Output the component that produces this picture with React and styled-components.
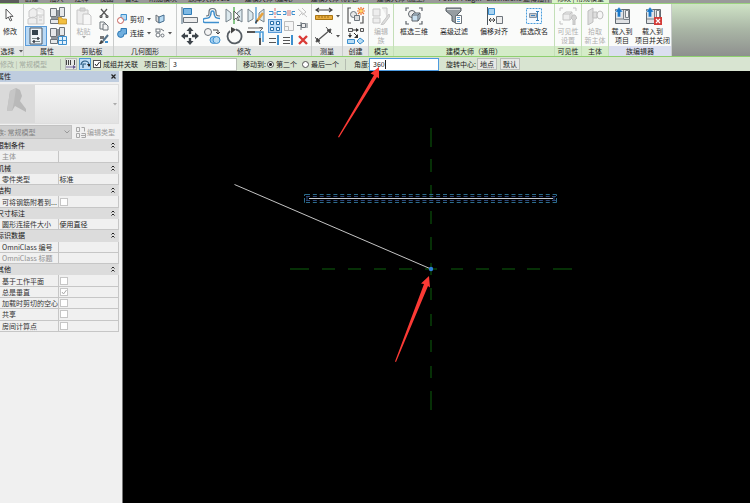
import React from 'react';
import styled, { createGlobalStyle, css } from 'styled-components';

const Global = createGlobalStyle`
  * { box-sizing: border-box; }
  body { margin: 0; background: #000; overflow: hidden; }
  body, button, input, select {
    font-family: "Noto Sans CJK SC", sans-serif;
    font-size: 7px;
    line-height: 9px;
    color: #222;
  }
`;

const Page = styled.div`
  position: relative;
  display: flex;
  flex-direction: column;
  min-height: 100vh;
`;

/* ---------- tab strip ---------- */
const TabStrip = styled.nav`
  display: grid;
  grid-template-columns: 19px repeat(5, 25px) 38px 54px 66px 66px 66px 52px 36px 30px 57px 1fr;
  height: 3px;
  overflow: hidden;
  background: #9a9a9a;
`;
const Tab = styled.button`
  display: flex;
  align-items: flex-end;
  justify-content: center;
  height: 3px;
  padding: 0;
  border: 0;
  white-space: nowrap;
  background: ${p => (p.$active ? '#d9f3ca' : p.$app ? '#5c5c5c' : 'transparent')};
`;

/* ---------- ribbon ---------- */
const Ribbon = styled.div`
  display: flex;
  height: 54px;
  border-top: 1px solid #9bd37f;
  border-bottom: 1px solid #8fd070;
  background: linear-gradient(#cfe3c6, #a9b5a5 50%, #8e908e);
`;
const tones = { plain: '#e3e5e4', green: '#d4ecc8', blue: '#dbdff0' };
const Panel = styled.section`
  display: flex;
  flex-direction: column;
  flex: none;
  width: ${p => p.$w}px;
  border-right: 1px solid ${p => (p.$tone === 'green' ? '#c4dfb8' : '#c9cccb')};
  background: #fafbfa;
`;
const PanelBody = styled.div`
  flex: 1;
  display: flex;
  min-height: 0;
  justify-content: ${p => p.$justify || 'center'};
  gap: ${p => p.$gap || 0}px;
  padding: 2px 0 0;
`;
const PanelLabel = styled.div`
  height: 10px;
  display: flex;
  align-items: center;
  justify-content: center;
  gap: 4px;
  white-space: nowrap;
  background: ${p => tones[p.$tone || 'plain']};
`;
const Cells = styled.div`
  display: grid;
  grid-template-columns: ${p => p.$cols};
  grid-template-rows: ${p => p.$rows};
  place-items: center;
`;
const Tool = styled.button`
  display: flex;
  align-items: center;
  justify-content: ${p => (p.$start ? 'flex-start' : 'center')};
  gap: 3px;
  width: 100%;
  height: 100%;
  padding: 0;
  border: 1px solid ${p => (p.$on ? '#5a9bd8' : 'transparent')};
  background: ${p => (p.$on ? '#b9d9f5' : 'transparent')};
  white-space: nowrap;
  svg { flex: none; display: block; }
`;
const BigTool = styled.button`
  display: flex;
  flex-direction: column;
  align-items: center;
  flex: none;
  width: ${p => p.$w}px;
  padding: 1px 0 0;
  border: 0;
  background: transparent;
  white-space: nowrap;
  color: ${p => (p.$off ? '#b0b0b0' : '#222')};
  svg { display: block; margin-bottom: 2px; }
`;

/* ---------- options bar ---------- */
const Options = styled.form`
  display: grid;
  grid-template-columns: 60px 5px 12px 2px 12px 2px 51px 25px 68px 6px 24px 35px 43px 9px 15px 70px 7px 31px 20px 3px 20px;
  align-items: center;
  height: 14px;
  background: #d8e4d1;
  white-space: nowrap;
`;
const Dim = styled.span`color: #a3aba0;`;
const Rule = styled.span`
  width: 1px;
  height: 11px;
  background: #b5bdb1;
`;
const Mini = styled.button`
  display: flex;
  align-items: center;
  justify-content: center;
  height: 12px;
  padding: 0;
  border: 1px solid ${p => (p.$on ? '#4f97d6' : '#b9bdb8')};
  background: ${p => (p.$on ? '#c3def5' : '#e6e8e5')};
`;
const Field = styled.input`
  width: 100%;
  height: 13px;
  padding: 0 3px;
  border: 1px solid ${p => (p.$focus ? '#4d9be0' : '#b8bdb6')};
  background: #fff;
  outline: 0;
`;
const FieldWrap = styled.span`
  display: grid;
  position: relative;
`;
const Caret = styled.i`
  position: absolute;
  left: 16px;
  top: 2px;
  width: 1px;
  height: 9px;
  background: #222;
`;
const Choice = styled.label`
  display: flex;
  align-items: center;
  gap: 2px;
`;
const Radio = styled.input`
  appearance: none;
  width: 7px;
  height: 7px;
  margin: 0;
  border: 1px solid #555;
  border-radius: 50%;
  background: #fff;
  &:checked { background: radial-gradient(#222 0 1px, #fff 2px); }
`;
const TickBox = styled.span`
  display: grid;
  width: 8px;
  height: 8px;
  > * { grid-area: 1 / 1; }
  svg { pointer-events: none; }
`;
const TickInput = styled.input`
  appearance: none;
  width: 8px;
  height: 8px;
  margin: 0;
  border: 1px solid ${p => (p.$pale ? '#c6c6c6' : '#555')};
  background: #fff;
`;

/* ---------- work area ---------- */
const Work = styled.main`
  display: flex;
  flex: 1;
`;
const Side = styled.aside`
  flex: none;
  width: 123px;
  padding-right: 3px;
  border-right: 1px solid #777;
  background: #f0f0f0;
  overflow: hidden;
`;
const SideTitle = styled.header`
  display: flex;
  align-items: center;
  justify-content: space-between;
  height: 11px;
  background: #bfcddf;
`;
const Cut = styled.span`margin-left: -3px;`;
const Close = styled.button`
  display: flex;
  padding: 0 3px;
  border: 0;
  background: transparent;
`;
const Preview = styled.button`
  display: flex;
  align-items: center;
  justify-content: space-between;
  width: 100%;
  height: 40px;
  margin: 2px 0 1px;
  padding: 0 1px 0 0;
  border: 1px solid #dedede;
  border-left: 0;
  background: linear-gradient(#f5f5f5, #e2e2e2);
`;
const TypeRow = styled.div`
  display: grid;
  grid-template-columns: 72px 1fr;
  height: 14px;
`;
const TypeBox = styled.span`
  position: relative;
  display: grid;
  svg { position: absolute; right: 2px; top: 5px; pointer-events: none; }
`;
const TypeSelect = styled.select`
  appearance: none;
  width: 100%;
  height: 14px;
  padding: 0;
  text-indent: -3px;
  border: 1px solid #c2c2c2;
  border-left: 0;
  border-radius: 0;
  background: #cfcfcf;
  color: #808080;
  opacity: 1;
`;
const EditType = styled.button`
  display: flex;
  align-items: center;
  gap: 1px;
  padding: 0 0 0 3px;
  border: 0;
  background: transparent;
  color: #9b9b9b;
  white-space: nowrap;
`;
const Props = styled.table`
  width: 119px;
  height: 193px;
  table-layout: fixed;
  border-collapse: collapse;
  white-space: nowrap;
  tr { height: 11px; }
`;
const cell = css`
  padding: 0;
  text-align: left;
  font-weight: 400;
  line-height: 8px;
  vertical-align: middle;
  overflow: hidden;
`;
const GroupCell = styled.th`
  ${cell}
  border: 1px solid #dcdcdc;
  border-left: 0;
  background: #dcdcdc;
  color: #111;
  div { display: flex; justify-content: space-between; align-items: center; height: 8px; padding-right: 3px; }
`;
const NameCell = styled.th`
  ${cell}
  padding-left: 2px;
  border: 1px solid #c6c6c6;
  border-left: 0;
  color: ${p => (p.$off ? '#8f8f8f' : '#333')};
`;
const ValueCell = styled.td`
  ${cell}
  padding-left: 1px;
  border: 1px solid #c6c6c6;
`;
const Canvas = styled.div`
  flex: 1;
  min-width: 0;
  background: #000;
  overflow: hidden;
  svg { display: block; }
`;
const Notes = styled.svg`
  position: absolute;
  left: 330px;
  top: 60px;
  pointer-events: none;
`;

/* ---------- drawings ---------- */
const G = '#6d747b';
const B = '#3d8fce';
const L = '#b9dcf3';
const drawings = {
  cursor: <path d="M5 2v10l2.300-2 2 4 1.500-.8-2-3.800H12z" fill="#fff" stroke="#444" strokeWidth=".9" />,
  family: <g fill="#eee" stroke="#c9c9c9"><path d="M2 4l4-3 4 2v6l-4 2-4-1zM8 3l4-2 5 2v5M1 12l5-2 4 2v5H1z" /><path d="M10 8h7v9h-7z" /><path d="M12 10h3M12 13h3" /></g>,
  typeFolder: <g><path d="M1.500 1.500h6v8h-6zM10.500.5h5v9h-5zM1.500 12.500h8v4h-8z" fill="#e6e8ea" stroke={G} /><path d="M9 3v8H2" fill="none" stroke={G} strokeWidth="1.500" /><path d="M9.500 10.500h3l1 1.500h4v5h-8z" fill="#f2bf41" stroke="#b98516" strokeWidth=".7" /></g>,
  props: <g><path d="M3 1h12v16H3z" fill="#eef3f7" stroke="#4c5964" /><path d="M5 3h6v5H5z" fill="#33414d" /><path d="M5 11.500h8M5 14.500h8" stroke="#566" strokeWidth=".8" /><path d="M11 10v3M7 13v3" stroke="#223" strokeWidth="1.300" /></g>,
  typeGrid: <g><path d="M1.500 1.500h6v8h-6zM10.500.5h5v8h-5zM1.500 12.500h7v4h-7z" fill="#e6e8ea" stroke={G} /><path d="M9 2v9H2" fill="none" stroke={G} strokeWidth="1.500" /><path d="M9.500 9.500h8v8h-8z" fill="#e2f1fc" stroke={B} /><path d="M13.500 9v9M9 13.500h9" stroke={B} /></g>,
  paste: <g fill="#ececec" stroke="#c6c6c6"><path d="M2 3h11v14H2z" /><path d="M5 1h5v3H5z" fill="#d8d8d8" /><path d="M8 7h6l2 2v9H8z" fill="#f7f7f7" /></g>,
  scissors: <g fill="none" stroke="#555" strokeWidth="1.200"><path d="M2 1l6 7M8 1L2 8" /><circle cx="2" cy="8.500" r="1" /><circle cx="8" cy="8.500" r="1" /></g>,
  copyDoc: <g fill="#f4f4f4" stroke={G}><path d="M1 1h4l2 2v5H1z" /><path d="M4 3h3l2 2v4H4z" /></g>,
  brush: <g><path d="M1 2h4v3H1z" fill="#777" /><path d="M9 1L4 7" stroke="#55738b" strokeWidth="2" /><path d="M2 6l3 2-3 2H0z" fill="#444" /><path d="M6 8h3" stroke={B} strokeWidth="2" /></g>,
  cut: <g><path d="M4 .5h5.500V6H6L4 4z" fill={L} stroke={B} /><circle cx="3.500" cy="6.500" r="3" fill="#fff" stroke="#c55e57" /></g>,
  join: <g fill="#6faede" stroke="#2c78b3"><path d="M4 .5h5.500V6H7a3.200 3.200 0 1 1-3-3z" /></g>,
  cope: <g><path d="M1 1l3 2v6L1 7z" fill="#ddd" stroke={G} /><path d="M4 3l5-2v6L4 9z" fill={L} stroke="#436b8c" /></g>,
  unjoin: <g fill="#fff" stroke={G}><rect x="1" y="1" width="4" height="3" /><circle cx="3" cy="7" r="2" /><circle cx="7.500" cy="7.500" r="1.500" /><path d="M6 1l3 2" /></g>,
  align: <g><path d="M1 0v17" stroke="#4f6a80" /><path d="M2.500 1.500h8v6h-8z" fill="#7eb9e4" stroke="#2f7db8" /><path d="M2.500 10.500h14v5h-14z" fill="#ececec" stroke={G} /></g>,
  offset: <g fill="none"><path d="M3 9c3 0 3-1 3-4a3.500 3.500 0 0 1 7 0c0 3 0 4 4 4" stroke="#68737c" strokeWidth="1.200" /><path d="M17 11.500c-4 0-6-1-6-6 0-2-3-2-3 0 0 5-2 6-6 6a2 2 0 0 0 0 4h14" stroke={B} strokeWidth="1.500" /></g>,
  mirror1: <g><path d="M1 2l5 4v6l-5 3zM17 2l-5 4v6l5 3z" fill="#dce9ee" stroke="#76838c" /><path d="M9 0v17" stroke="#63b663" strokeWidth="1.500" /><path d="M9 4v9l2-2 2 3 1-1-2-3h3z" fill="#fff" stroke="#444" strokeWidth=".8" /></g>,
  mirror2: <g><path d="M1 2l5 4v6l-5 3zM17 2l-5 4v6l5 3z" fill="#dce9ee" stroke="#76838c" /><path d="M9 0v17" stroke={B} strokeWidth="1.200" /><path d="M16 6l-6 8" stroke="#e7a13c" strokeWidth="2.500" /><path d="M10.500 13l-2 3" stroke="#444" strokeWidth="1.500" /></g>,
  move: <g fill="#3d444a"><path d="M9 0l3.500 4h-2.300v3H7.800V4H5.500zM9 18l3.500-4h-2.300v-3H7.800v3H5.500zM0 9l4-3.500v2.300h3v2.400H4v2.300zM18 9l-4-3.500v2.300h-3v2.400h3v2.300z" /></g>,
  copy: <g><circle cx="5" cy="5" r="3.500" fill="#f4f4f4" stroke={G} /><path d="M10 3h5v4M13 5l2 2 2-2" fill="none" stroke="#444" /><circle cx="10.500" cy="13" r="3.500" fill="#9fcdf0" stroke={B} /><circle cx="13.500" cy="13" r="3.500" fill={L} stroke={B} /></g>,
  rotate: <g><path d="M5 4a7 7 0 1 0 6-1.500" fill="none" stroke="#565d63" strokeWidth="1.800" /><path d="M6 0l5 2.500-5 4z" fill="#444" /></g>,
  corner: <g fill="none"><path d="M0 5h8M13 11v7" stroke="#555" strokeWidth="2" /><path d="M8 5h5v6M10 5h6v10" stroke="#4a9cd9" strokeWidth="1.500" /><path d="M1 1h14M12 0l4 1-3 3" stroke="#666" /></g>,
  split: <g fill="none" stroke={B}><path d="M0 4.500h4v3H0M12 4.500H8v3h4" /><path d="M6 1v10" stroke="#d66" strokeDasharray="3 1" /></g>,
  gap: <g fill="none" stroke={B}><path d="M0 4.500h3v3H0M12 4.500H9v3h3" /><path d="M5 3v6M7 3v6" stroke="#c77" /></g>,
  unpin: <g fill="none" stroke="#c3c3c3"><path d="M1 2l9 8M5 1l4 4-4 3M2 9l3-3" /></g>,
  array: <g fill="#f2f8fd" stroke="#286ea8"><path d="M1.500 1.500h3v3h-3zM7.500 1.500h3v3h-3zM1.500 7.500h3v3h-3zM7.500 7.500h3v3h-3z" /></g>,
  scale: <g fill="#f6f6f6" stroke="#bdbdbd"><path d="M1.500 1.500h9v9h-9z" /><path d="M1.500 6.500h4v4h-4z" /></g>,
  pin: <g fill="#eee" stroke={G}><path d="M4.500 3.500h4v4h-4zM4 2v8M0 5.500h4M10 3v5" /></g>,
  trim1: <g fill="none" stroke="#555"><path d="M0 4.500h7M0 8.500h7" /><path d="M9 1v10" stroke={B} strokeWidth="2" /></g>,
  trim2: <g fill="none" stroke="#555"><path d="M0 3.500h7M0 6.500h7M0 9.500h7" /><path d="M9 1v10" stroke={B} strokeWidth="2" /></g>,
  del: <path d="M2 2l8 8M10 2l-8 8" stroke="#d93a35" strokeWidth="2.400" />,
  ruler: <g><path d="M2 3h14M4 1L1 3l3 2M14 1l3 2-3 2" fill="none" stroke="#444" strokeWidth="1.200" /><path d="M.5 8.500h17v4H.5z" fill="#e9ad3d" stroke="#a87412" /><path d="M4 9v2M7 9v2M10 9v2M13 9v2" stroke="#7a5410" strokeWidth=".7" /></g>,
  dim: <g fill="none" stroke="#555"><path d="M2 14L15 3" strokeWidth="1.300" /><path d="M0 10l5 7M11 0l6 7" /><path d="M1 15l1-4 3 3zM16 2l-1 4-3-3z" fill="#444" /></g>,
  create: <g><path d="M4 1H1v15h3M13 16h3V9" fill="none" stroke="#555" strokeWidth="1.200" /><circle cx="6.500" cy="7.500" r="3" fill="#e8e8e8" stroke={G} /><path d="M7.500 8.500h5v5h-5z" fill="#ddd" stroke={G} /><path d="M14 0v8M10 4h8M11 1l6 6M17 1l-6 6" stroke="#ee7432" strokeWidth="1.200" /><circle cx="14" cy="4" r="1.800" fill="#ffd96b" /></g>,
  similar: <g><path d="M1.500 1.500h4v3h-4zM13.500 1.500h3v3h-3z" fill="#eee" stroke="#555" /><path d="M6 3h5M3 6v4M7 6l4 4" stroke="#333" /><path d="M9 1l3 2-3 2zM1 8h4l-2 3zM11 7v4H7z" fill="#333" /><path d="M.5 12.500h7v4h-7zM13 11l4 3-4 3-3-3z" fill={L} stroke={B} /></g>,
  editFam: <g fill="#eee" stroke="#c7c7c7"><path d="M1 2h7v7H1zM10 1h5v9M1 11h7v5H1z" /><path d="M17 7l-7 9-1 2 3-1 6-8z" fill="#ddd" /></g>,
  box3d: <g fill="none" stroke="#5d6369"><path d="M1 4V1h3M14 1h3v3M17 14v3h-3M4 17H1v-3" strokeWidth="1.200" /><circle cx="7" cy="7" r="3.500" fill="#eee" /><path d="M7 8l2-2h6v5l-2 3H7z" fill="#c9e0f0" /><path d="M7 8h6v6M13 8l2-2" /></g>,
  filter: <g><path d="M1 1h15v3l-5 5v7l-4-2V9L1 4z" fill="#969da2" stroke="#555d63" /><path d="M2 2.500h13" stroke="#d7dadd" /><path d="M10.500 8.500h6v8h-6z" fill="#fff" stroke={G} /><path d="M12 10.500h3M12 12.500h3M12 14.500h3" stroke={B} strokeWidth=".8" /></g>,
  shift: <g><path d="M2.500 0v18" stroke="#4c565e" /><path d="M3.500 1.500h6v6h-6z" fill="#a9d3f0" stroke={B} /><path d="M11.500 9.500h6v7h-6z" fill="#eee" stroke={G} /><path d="M4 13h6M6 11l-2 2 2 2M8 11l2 2-2 2" fill="none" stroke="#444" /></g>,
  rename: <g><path d="M1.500 1.500h15v15h-15z" fill="#f5faff" stroke="#499ddd" strokeDasharray="2 1" /><path d="M4.500 6.500h7v4h-7z" fill="#c4c9d1" stroke="#8895a4" /><path d="M6 8.500h4M12.500 4v10M11 4.500h3M11 13.500h3" stroke="#3b82bd" /></g>,
  visible: <g fill="#eee" stroke="#c3c3c3"><path d="M1 4V1h3M14 1h3v3M4 17H1v-3" fill="none" /><path d="M4 7l3-2h6v6l-2 2H4zM4 7h7v6M11 7l2-2" /><path d="M14 8l-2 3 2 2v5h2v-5l2-2-2-3z" fill="#d4d4d4" /></g>,
  host: <g fill="#dedede" stroke="#bfbfbf"><path d="M2 4l5-3v14l-5 3z" /><path d="M7 5h4v6H7z" /><ellipse cx="14" cy="8" rx="3" ry="4" fill="#f6f6f6" /></g>,
  load: <g><path d="M2.500 2.500h14v14h-14z" fill="#e0e2e4" stroke="#636b72" /><path d="M10.500 3v9H3M10.500 12.500h6" fill="none" stroke="#7a8288" /><path d="M12.500 3.500h3v7h-3z" fill="#f7f7f7" stroke="#7a8288" /><path d="M6 0L2 5h2.300v5h3.400V5H10z" fill="#1977c8" stroke="#e9f5ff" strokeWidth=".5" /></g>,
  ruleOpt: <g stroke="#444"><path d="M.5 1v5M2.500 1v5M4.500 1v5M8.500 1v5" /><path d="M0 8h8" stroke="#74699f" /><path d="M7 6l3 2-3 2z" fill="#67598f" stroke="none" /></g>,
  radial: <g fill="none" stroke="#24577f"><path d="M1 6a4 4 0 0 1 8 0M3 9V5h3" strokeWidth="1.200" /><path d="M7 5h4L9 8z" fill="#222" stroke="none" /></g>,
  editType: <g fill="none" stroke="#a8a8a8"><path d="M1.500.5h3v4h-3zM6.500.5h3v4M1.500 6.500h3v4h-3zM6.500 6.500h4v4h-4M6 8.500h4" /></g>,
};
const loadClose = (
  <g>{drawings.load}<path d="M10 10h8v8h-8z" fill="#d43d39" /><path d="M12 12l4 4M16 12l-4 4" stroke="#fff" strokeWidth="1.200" /></g>
);
const Icon = ({ n, s = 18 }) => (
  <svg width={s} height={s} viewBox={`0 0 ${s} ${s}`} aria-hidden="true">
    {n === 'loadClose' ? loadClose : drawings[n]}
  </svg>
);
const Down = ({ off }) => (
  <svg width="4" height="3" viewBox="0 0 4 3" aria-hidden="true"><path d="M0 0h4L2 2.500z" fill={off ? '#aaa' : '#555'} /></svg>
);
const Tick = ({ pale, ...rest }) => (
  <TickBox>
    <TickInput type="checkbox" $pale={pale} {...rest} />
    {rest.defaultChecked && <svg width="8" height="8" aria-hidden="true"><path d="M2 4l1.500 2L6.500 2" fill="none" stroke={pale ? '#aaa' : '#222'} /></svg>}
  </TickBox>
);
const T = ({ n, s, on, start, label, children }) => (
  <Tool type="button" $on={on} $start={start} aria-label={label}>{n && <Icon n={n} s={s} />}{children}</Tool>
);
const Big = ({ n, w, off, lines }) => (
  <BigTool type="button" $w={w} $off={off}>
    <Icon n={n} />
    {lines.map(t => <span key={t}>{t}</span>)}
  </BigTool>
);
const Group = ({ w, title, tone, children, ...rest }) => (
  <Panel $w={w} $tone={tone}>
    <PanelBody {...rest}>{children}</PanelBody>
    <PanelLabel $tone={tone}>{title}</PanelLabel>
  </Panel>
);

const tabs = ['创建', '插入', '注释', '视图', '管理', '附加模块', '族库大师V1.1', '建模大师 (建筑)', '建模大师 (机电)', '建模大师 (施工)', 'Power Plugin', 'Extensions', '速博插件'];

const groups = [
  ['限制条件', [['主体', '', 'off']]],
  ['机械', [['零件类型', '标准']]],
  ['结构', [['可将钢筋附着到...', false]]],
  ['尺寸标注', [['圆形连接件大小', '使用直径']]],
  ['标识数据', [['OmniClass 编号', ''], ['OmniClass 标题', '', 'off']]],
  ['其他', [['基于工作平面', false], ['总是垂直', true], ['加载时剪切的空心', false], ['共享', false], ['房间计算点', false]]],
];

const vertical = [[128, 147], [159, 172], [185, 198], [211, 224], [237, 250], [263, 275], [288, 300], [314, 326], [340, 352], [366, 378], [391, 410]];
const horizontal = [[290, 309], [322, 335], [348, 361], [374, 386], [399, 412], [425, 437], [451, 463], [476, 489], [502, 515], [527, 540], [553, 572]];

const Drawing = () => (
  <svg width="627" height="432" viewBox="123 71 627 432" role="img" aria-label="绘图区域">
    <g stroke="#063006" strokeWidth="2">
      {vertical.map(([a, b]) => <path key={a} d={`M431 ${a}V${b}`} />)}
      {horizontal.map(([a, b]) => <path key={a} d={`M${a} 269H${b}`} />)}
    </g>
    <g fill="none" strokeDasharray="4 2.850">
      <path d="M306 194.500H556M306 202.500H556" stroke="#2b6c8c" />
      <path d="M306 196.500H556M306 200.500H556" stroke="#2c4679" />
    </g>
    <path d="M308 194.500h-3.500v8h3.500M553 194.500h3.500v8H553" fill="none" stroke="#2b6c8c" strokeDasharray="5 2" />
    <path d="M309 196.500h-2v4h2M552 196.500h2v4h-2" fill="none" stroke="#2c4679" />
    <path d="M309 198.500H553" stroke="#c8cbd0" />
    <path d="M234.500 184.500L431 269" stroke="#c4c4c4" />
    <circle cx="431" cy="269" r="2.200" fill="#2f80d8" />
  </svg>
);

export default function App() {
  return (
    <Page>
      <Global />
      <TabStrip>
        <Tab $app aria-label="应用程序菜单" />
        {tabs.map(t => <Tab key={t}>{t}</Tab>)}
        <Tab $active>修改 | 常规模型</Tab>
      </TabStrip>

      <Ribbon>
        <Group w={24} title={<>选择 <Down /></>} $justify="flex-start">
          <Big n="cursor" w={20} lines={['修改']} />
        </Group>
        <Group w={47} title="属性">
          <Cells $cols="22px 22px" $rows="20px 20px">
            <T n="family" label="族类别和族参数" />
            <T n="typeFolder" label="类型属性" />
            <T n="props" on label="属性" />
            <T n="typeGrid" label="族类型" />
          </Cells>
        </Group>
        <Group w={43} title="剪贴板" $gap={4}>
          <BigTool type="button" $w={20} $off>
            <Icon n="paste" />
            <span>粘贴</span>
            <Down off />
          </BigTool>
          <Cells $cols="13px" $rows="13px 13px 14px">
            <T n="scissors" s={10} label="剪切到剪贴板" />
            <T n="copyDoc" s={10} label="复制到剪贴板" />
            <T n="brush" s={10} label="匹配类型属性" />
          </Cells>
        </Group>
        <Group w={63} title="几何图形">
          <Cells $cols="38px 20px" $rows="6px 14px 14px">
            <span /><span />
            <T n="cut" s={10} start>剪切 <Down /></T>
            <T n="cope" s={10} start label="连接端切割" />
            <T n="join" s={10} start>连接 <Down /></T>
            <T n="unjoin" s={10} start label="取消连接"><Down /></T>
          </Cells>
        </Group>
        <Group w={135} title="修改" $gap={1}>
          <Cells $cols="repeat(4, 22px)" $rows="20px 20px">
            {['align', 'offset', 'mirror1', 'mirror2', 'move', 'copy', 'rotate', 'corner'].map(n => <T key={n} n={n} label={n} />)}
          </Cells>
          <Cells $cols="14px 14px 14px" $rows="13px 14px 13px">
            {['split', 'gap', 'unpin', 'array', 'scale', 'pin', 'trim1', 'trim2', 'del'].map(n => <T key={n} n={n} s={12} on={n === 'array'} label={n} />)}
          </Cells>
        </Group>
        <Group w={31} title="测量">
          <Cells $cols="28px" $rows="20px 20px">
            <T n="ruler" label="测量"><Down /></T>
            <T n="dim" label="对齐尺寸标注"><Down /></T>
          </Cells>
        </Group>
        <Group w={26} title="创建">
          <Cells $cols="22px" $rows="20px 20px">
            <T n="create" label="创建组" />
            <T n="similar" label="创建类似实例" />
          </Cells>
        </Group>
        <Group w={25} title="模式" tone="green">
          <Big n="editFam" w={24} off lines={['编辑', '族']} />
        </Group>
        <Group w={161} title="建模大师（通用）" tone="green">
          <Big n="box3d" w={40} lines={['框选三维']} />
          <Big n="filter" w={40} lines={['高级过滤']} />
          <Big n="shift" w={40} lines={['偏移对齐']} />
          <Big n="rename" w={40} lines={['框选改名']} />
        </Group>
        <Group w={27} title="可见性" tone="green">
          <Big n="visible" w={26} off lines={['可见性', '设置']} />
        </Group>
        <Group w={27} title="主体" tone="green">
          <Big n="host" w={26} off lines={['拾取', '新主体']} />
        </Group>
        <Group w={63} title="族编辑器" tone="blue">
          <Big n="load" w={25} lines={['载入到', '项目']} />
          <Big n="loadClose" w={36} lines={['载入到', '项目并关闭']} />
        </Group>
      </Ribbon>

      <Options onSubmit={e => e.preventDefault()}>
        <Dim>修改 | 常规模型</Dim>
        <Rule />
        <Mini type="button" aria-label="线性"><Icon n="ruleOpt" s={10} /></Mini>
        <span />
        <Mini type="button" $on aria-label="径向"><Icon n="radial" s={10} /></Mini>
        <span />
        <Choice><Tick defaultChecked />成组并关联</Choice>
        <label htmlFor="count">项目数:</label>
        <Field id="count" defaultValue="3" />
        <span />
        <span>移动到:</span>
        <Choice><Radio type="radio" name="to" defaultChecked />第二个</Choice>
        <Choice><Radio type="radio" name="to" />最后一个</Choice>
        <Rule />
        <label htmlFor="angle">角度:</label>
        <FieldWrap><Field id="angle" $focus defaultValue="360" /><Caret /></FieldWrap>
        <span />
        <span>旋转中心:</span>
        <Mini type="button">地点</Mini>
        <span />
        <Mini type="button">默认</Mini>
      </Options>

      <Work>
        <Side>
          <SideTitle>
            <Cut>属性</Cut>
            <Close type="button" aria-label="关闭">
              <svg width="5" height="5" aria-hidden="true"><path d="M.5.5l4 4M4.500.5l-4 4" stroke="#222" strokeWidth="1.200" /></svg>
            </Close>
          </SideTitle>
          <Preview type="button" aria-label="类型选择器">
            <svg width="35" height="38" aria-hidden="true">
              <path d="M0 0h35v38H0z" fill="#dadada" />
              <path d="M10 6l6-3 4 2 2 6-2 5 6 8v3l-11-6-3 5-5 0z" fill="#b9b9b9" />
              <path d="M10 6l6-3-2 14-2 9-5 0z" fill="#c6c6c6" />
            </svg>
            <Down off />
          </Preview>
          <TypeRow>
            <TypeBox>
              <TypeSelect disabled aria-label="族类型"><option>族: 常规模型</option></TypeSelect>
              <svg width="6" height="4" aria-hidden="true"><path d="M.5.5L3 3 5.500.5" fill="none" stroke="#999" /></svg>
            </TypeBox>
            <EditType type="button"><Icon n="editType" s={11} />编辑类型</EditType>
          </TypeRow>
          <Props>
            <colgroup><col width="58" /><col /></colgroup>
            <tbody>
              {groups.map(([name, rows]) => (
                <React.Fragment key={name}>
                  <tr>
                    <GroupCell colSpan={2}>
                      <div>
                        <Cut>{name}</Cut>
                        <svg width="4" height="6" aria-hidden="true"><path d="M.5 2.500L2 1l1.500 1.500M.5 5.500L2 4l1.500 1.500" fill="none" stroke="#222" /></svg>
                      </div>
                    </GroupCell>
                  </tr>
                  {rows.map(([label, value, off]) => (
                    <tr key={label}>
                      <NameCell scope="row" $off={off}>{label}</NameCell>
                      <ValueCell>
                        {typeof value === 'boolean'
                          ? <Tick pale aria-label={label} defaultChecked={value} />
                          : value}
                      </ValueCell>
                    </tr>
                  ))}
                </React.Fragment>
              ))}
            </tbody>
          </Props>
        </Side>
        <Canvas><Drawing /></Canvas>
      </Work>

      <Notes width="110" height="310" viewBox="330 60 110 310" aria-hidden="true">
        <g fill="#fb3a35">
          <path d="M379 67l-8.500 6.500 3.500 1.500L338 137l1 .5L377 77l2 1.500z" />
          <path d="M429 276l-8 7.500 3 .5L395 361.500l1 .5L428 286l2 1.500z" />
        </g>
      </Notes>
    </Page>
  );
}
